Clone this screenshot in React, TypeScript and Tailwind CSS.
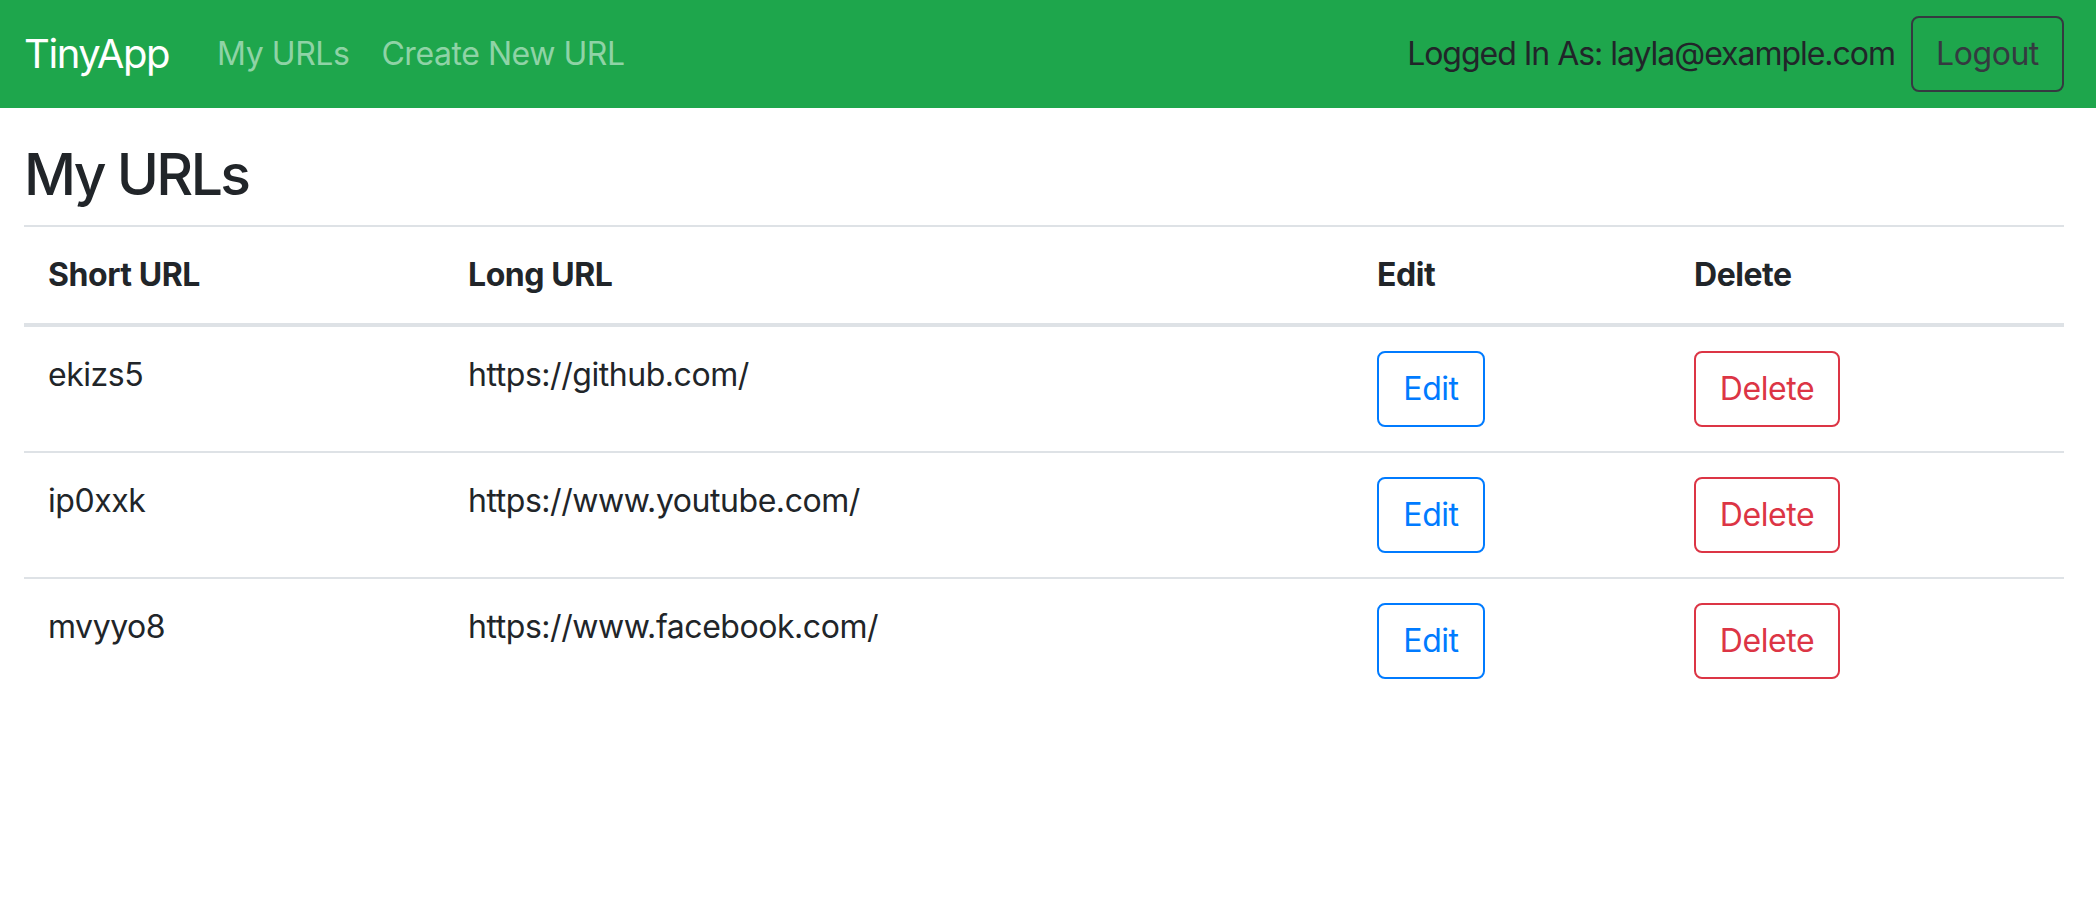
const urls = [
  { short: "ekizs5", long: "https://github.com/" },
  { short: "ip0xxk", long: "https://www.youtube.com/" },
  { short: "mvyyo8", long: "https://www.facebook.com/" },
];

function Navbar() {
  return (
    <nav className="flex h-[108px] items-center bg-[#1ea64c] pl-[24px] pr-[32px]">
      <a href="#" className="mr-[32px] text-[40px] leading-[1.5] tracking-[-0.035em] text-white">
        TinyApp
      </a>
      <div className="flex items-center">
        <a href="#" className="px-[16px] text-[32px] leading-[1.5] text-[#8fd3a6]">
          My URLs
        </a>
        <a href="#" className="px-[16px] text-[32px] leading-[1.5] text-[#8fd3a6]">
          Create New URL
        </a>
      </div>
      <div className="ml-auto flex items-center gap-[16px]">
        <span className="text-[32px] leading-[1.5] tracking-[-0.032em] text-[#212529]">
          Logged In As: layla@example.com
        </span>
        <button className="h-[76px] w-[153px] rounded-[8px] border-2 border-[#343a40] text-[32px] leading-[1.5] text-[#343a40]">
          Logout
        </button>
      </div>
    </nav>
  );
}

export default function App() {
  return (
    <div className="min-h-screen bg-white font-['Inter',sans-serif] tracking-[-0.028em] text-[#212529]">
      <Navbar />
      <main className="pl-[24px] pr-[32px]">
        <h1 className="mt-[33px] mb-[16px] text-[57px] font-medium leading-[1.2] tracking-[-0.045em]">
          My URLs
        </h1>
        <table className="w-full border-collapse text-left text-[32px] leading-[1.5]">
          <thead>
            <tr>
              <th className="w-[420px] border-t-2 border-b-4 border-[#dee2e6] p-[24px] align-bottom font-bold">
                Short URL
              </th>
              <th className="w-[909px] border-t-2 border-b-4 border-[#dee2e6] p-[24px] align-bottom font-bold">
                Long URL
              </th>
              <th className="w-[317px] border-t-2 border-b-4 border-[#dee2e6] p-[24px] align-bottom font-bold">
                Edit
              </th>
              <th className="border-t-2 border-b-4 border-[#dee2e6] p-[24px] align-bottom font-bold">
                Delete
              </th>
            </tr>
          </thead>
          <tbody>
            {urls.map((u, i) => (
              <tr key={u.short} className={i > 0 ? "border-t-2 border-[#dee2e6]" : ""}>
                <td className="p-[24px] align-top">{u.short}</td>
                <td className="p-[24px] align-top">{u.long}</td>
                <td className="p-[24px] align-top">
                  <button className="h-[76px] w-[108px] rounded-[8px] border-2 border-[#007bff] text-[32px] leading-[1.5] text-[#007bff]">
                    Edit
                  </button>
                </td>
                <td className="p-[24px] align-top">
                  <button className="h-[76px] w-[146px] rounded-[8px] border-2 border-[#dc3545] text-[32px] leading-[1.5] text-[#dc3545]">
                    Delete
                  </button>
                </td>
              </tr>
            ))}
          </tbody>
        </table>
      </main>
    </div>
  );
}
